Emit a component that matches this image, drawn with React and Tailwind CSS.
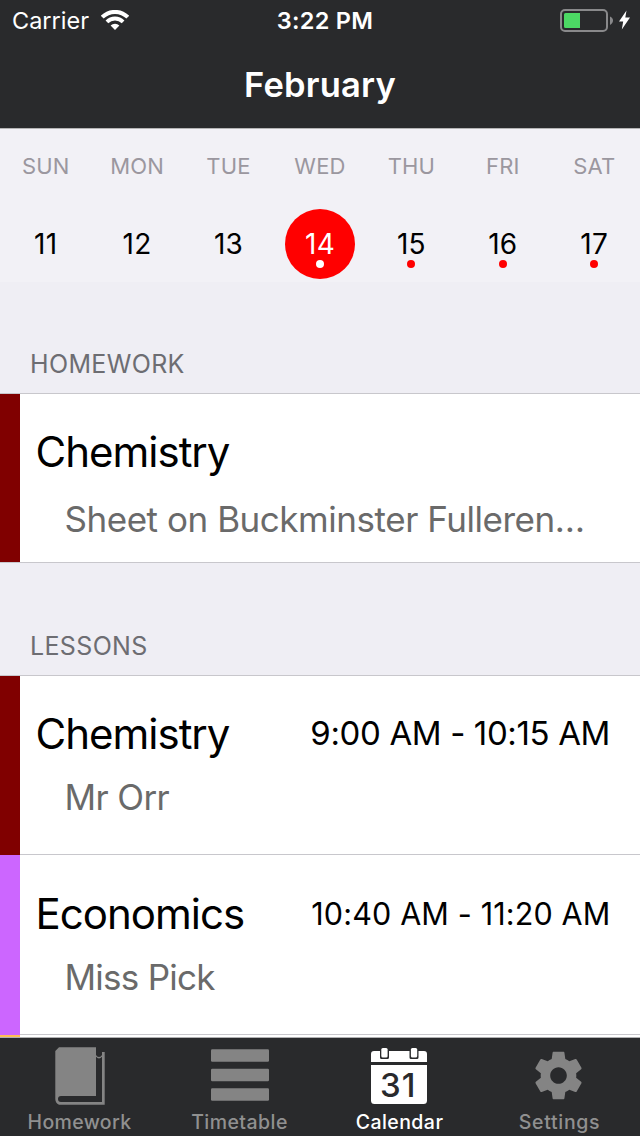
const days = [
  { name: "SUN", date: 11 },
  { name: "MON", date: 12 },
  { name: "TUE", date: 13 },
  { name: "WED", date: 14, selected: true, event: true },
  { name: "THU", date: 15, event: true },
  { name: "FRI", date: 16, event: true },
  { name: "SAT", date: 17, event: true },
];

function WifiIcon() {
  return (
    <svg className="mb-0.5 h-5 w-7" viewBox="0 0 28 20" fill="none" stroke="white">
      <path d="M1.2 7.2A18.1 18.1 0 0 1 26.8 7.2" strokeWidth="4" />
      <path d="M5.9 11.9A11.4 11.4 0 0 1 22.1 11.9" strokeWidth="3.8" />
      <path d="M9.6 15.6A6.2 6.2 0 0 1 18.4 15.6L14 20Z" fill="white" stroke="none" />
    </svg>
  );
}

function BatteryIcon() {
  return (
    <svg className="mb-0.5 h-6 w-[71px]" viewBox="0 0 71 24">
      <rect x="1" y="2" width="46" height="21" rx="4" fill="none" stroke="#89898b" strokeWidth="2" />
      <path d="M5.5 5H20V20H5.5A1.5 1.5 0 0 1 4 18.5V6.5A1.5 1.5 0 0 1 5.5 5Z" fill="#4cd964" />
      <path d="M50 8.5C54 10 54 15 50 17Z" fill="#89898b" />
      <path d="M66.5 2.5L59 13.6H63.2L61.8 21.5L70 9.6H65.3Z" fill="white" />
    </svg>
  );
}

function BookIcon() {
  return (
    <svg className="h-[58px] w-[50px]" viewBox="0 0 50 58">
      <path
        fillRule="evenodd"
        d="M4 .3H41V8Q42 10 44 10T47 8V5H49.7V57.7H4Q.3 56 .3 52V4ZM41 9.8Q44 13 47 9.8V55H6A3 3 0 0 1 6 49H41Z"
        fill="#848484"
      />
    </svg>
  );
}

function BarsIcon() {
  return (
    <svg className="mb-0.5 h-[52px] w-[58px]" viewBox="0 0 58 52" fill="#848484">
      <rect y="0.2" width="58" height="12.6" rx="1.2" />
      <rect y="19.7" width="58" height="12.6" rx="1.2" />
      <rect y="39.2" width="58" height="12.6" rx="1.2" />
    </svg>
  );
}

function CalendarIcon() {
  return (
    <svg className="mr-0.5 h-14 w-14" viewBox="0 0 56 56">
      <path d="M3 3H53A3 3 0 0 1 56 6V14H0V6A3 3 0 0 1 3 3ZM0 17H56V52.5A3.5 3.5 0 0 1 52.5 56H3.5A3.5 3.5 0 0 1 0 52.5Z" fill="white" />
      <path d="M9 1H18V9.5A1.5 1.5 0 0 1 16.5 11H10.5A1.5 1.5 0 0 1 9 9.5ZM38.5 1H47.5V9.5A1.5 1.5 0 0 1 46 11H40A1.5 1.5 0 0 1 38.5 9.5Z" fill="#292a2c" />
      <rect x="10.3" y="0" width="6.3" height="9.5" rx="1.5" fill="white" />
      <rect x="39.9" y="0" width="6.3" height="9.5" rx="1.5" fill="white" />
      <text x="9" y="49" fontSize="33" fontWeight="500" letterSpacing="1" fill="#292a2c">31</text>
    </svg>
  );
}

function GearIcon() {
  return (
    <svg className="mr-[3px] mb-px h-[57px] w-[57px]" viewBox="0 0 24 24" fill="#848484">
      <path d="M19.43 12.98c.04-.32.07-.64.07-.98s-.03-.66-.07-.98l2.11-1.65c.19-.15.24-.42.12-.64l-2-3.46c-.12-.22-.39-.3-.61-.22l-2.49 1c-.52-.4-1.08-.73-1.69-.98l-.38-2.65C14.46 2.18 14.25 2 14 2h-4c-.25 0-.46.18-.49.42l-.38 2.65c-.61.25-1.17.59-1.69.98l-2.49-1c-.23-.09-.49 0-.61.22l-2 3.46c-.13.22-.07.49.12.64l2.11 1.65c-.04.32-.07.65-.07.98s.03.66.07.98l-2.11 1.65c-.19.15-.24.42-.12.64l2 3.46c.12.22.39.3.61.22l2.49-1c.52.4 1.08.73 1.69.98l.38 2.65c.03.24.24.42.49.42h4c.25 0 .46-.18.49-.42l.38-2.65c.61-.25 1.17-.59 1.69-.98l2.49 1c.23.09.49 0 .61-.22l2-3.46c.12-.22.07-.49-.12-.64l-2.11-1.65zM12 15.5c-1.93 0-3.5-1.57-3.5-3.5s1.57-3.5 3.5-3.5 3.5 1.57 3.5 3.5-1.57 3.5-3.5 3.5z" />
    </svg>
  );
}

function StatusBar() {
  return (
    <div className="grid h-10 grid-cols-3 items-center pt-px text-[23.5px] leading-none">
      <div className="flex items-center gap-3 pl-3">
        <span>Carrier</span>
        <WifiIcon />
      </div>
      <span className="pl-2.5 text-center font-semibold tracking-[0.3px]">3:22 PM</span>
      <div className="flex justify-end pr-[9px]">
        <BatteryIcon />
      </div>
    </div>
  );
}

function Day({ name, date, selected, event }) {
  return (
    <div className="flex flex-col items-center">
      <span className="h-[34px] text-[22px] leading-[34px] tracking-[0.2px] text-[#9b979f]">{name}</span>
      <div
        className={
          "relative mt-[25.5px] flex size-[70px] items-center justify-center rounded-full pt-px text-[28px] leading-none tracking-[0.3px] " +
          (selected ? "bg-[#ff0000] text-white" : "text-black")
        }
      >
        {date}
        {event && (
          <span
            className={
              "absolute bottom-[11px] left-[31px] size-2 rounded-full " + (selected ? "bg-white" : "bg-[#ff0000]")
            }
          />
        )}
      </div>
    </div>
  );
}

function SectionTitle({ children }) {
  return (
    <h2 className="flex items-end border-b border-[#c8c7cc] pb-3 pl-[30px] text-[25px] leading-[34px] tracking-[0.35px] text-[#6d6d72]">
      {children}
    </h2>
  );
}

const titleClass = "text-[42px] leading-[50px] tracking-[-1px] text-black";
const subClass = "pl-[29px] text-[35px] leading-[44px] text-[#6a6a6a] whitespace-nowrap";

function Tab({ label, active, icon, tracking }) {
  return (
    <div className="flex flex-col items-center">
      <div className="flex h-[72px] items-center justify-center pt-1">{icon}</div>
      <span className={"pr-px text-[19.5px] leading-6 font-medium " + tracking + (active ? " text-white" : " text-[#909090]")}>
        {label}
      </span>
    </div>
  );
}

export default function App() {
  return (
    <div className="flex h-[1136px] w-[640px] flex-col overflow-hidden bg-[#efeef4] font-['Inter','Liberation_Sans',sans-serif]">
      <header className="h-[129px] shrink-0 border-b border-[#b4b4b5] bg-[#292a2c] text-white">
        <StatusBar />
        <h1 className="text-center text-[34.5px] leading-[90px] font-semibold tracking-[0.2px]">February</h1>
      </header>

      <section className="grid h-[153px] shrink-0 grid-cols-7 bg-[#f2f1f6] pt-5">
        {days.map((d) => (
          <Day key={d.name} {...d} />
        ))}
      </section>

      <main className="flex min-h-0 flex-1 flex-col overflow-hidden">
        <div className="flex h-28 shrink-0 flex-col justify-end">
          <SectionTitle>HOMEWORK</SectionTitle>
        </div>
        <div className="flex h-[169px] shrink-0 border-b border-[#c8c7cc] bg-white">
          <div className="w-5 bg-[#800000]" />
          <div className="flex flex-col gap-5 pt-[33px] pl-[15.5px]">
            <span className={titleClass}>Chemistry</span>
            <span className={subClass + " tracking-[-0.46px]"}>Sheet on Buckminster Fulleren…</span>
          </div>
        </div>

        <div className="flex h-[113px] shrink-0 flex-col justify-end">
          <SectionTitle>LESSONS</SectionTitle>
        </div>
        <div className="flex h-[179px] shrink-0 bg-white">
          <div className="w-5 bg-[#800000]" />
          <div className="flex flex-1 flex-col gap-4 border-b border-[#c8c7cc] pt-[33px] pl-[15.5px]">
            <div className="flex items-center justify-between pr-[30px]">
              <span className={titleClass}>Chemistry</span>
              <span className="mb-0.5 text-[33px] leading-[48px] tracking-[-0.37px]">9:00 AM - 10:15 AM</span>
            </div>
            <span className={subClass + " tracking-[-0.6px]"}>Mr Orr</span>
          </div>
        </div>
        <div className="flex h-[180px] shrink-0 bg-white">
          <div className="w-5 bg-[#cc66ff]" />
          <div className="flex flex-1 flex-col gap-4 border-b border-[#c8c7cc] pt-[34px] pl-[15.5px]">
            <div className="flex items-center justify-between pr-[29.5px]">
              <span className={titleClass}>Economics</span>
              <span className="text-[30.5px] leading-[50px] tracking-[0.15px]">10:40 AM - 11:20 AM</span>
            </div>
            <span className={subClass + " tracking-[-0.75px]"}>Miss Pick</span>
          </div>
        </div>
        <div className="flex flex-1 bg-white">
          <div className="w-5 bg-[#ffbf55]" />
        </div>
      </main>

      <nav className="grid h-[99px] shrink-0 grid-cols-4 border-t border-[#b0b0b2] bg-[#292a2c]">
        <Tab label="Homework" icon={<BookIcon />} tracking="tracking-[0.35px]" />
        <Tab label="Timetable" icon={<BarsIcon />} tracking="tracking-[0.45px]" />
        <Tab label="Calendar" icon={<CalendarIcon />} tracking="tracking-[0.45px]" active />
        <Tab label="Settings" icon={<GearIcon />} tracking="tracking-[0.7px]" />
      </nav>
    </div>
  );
}
